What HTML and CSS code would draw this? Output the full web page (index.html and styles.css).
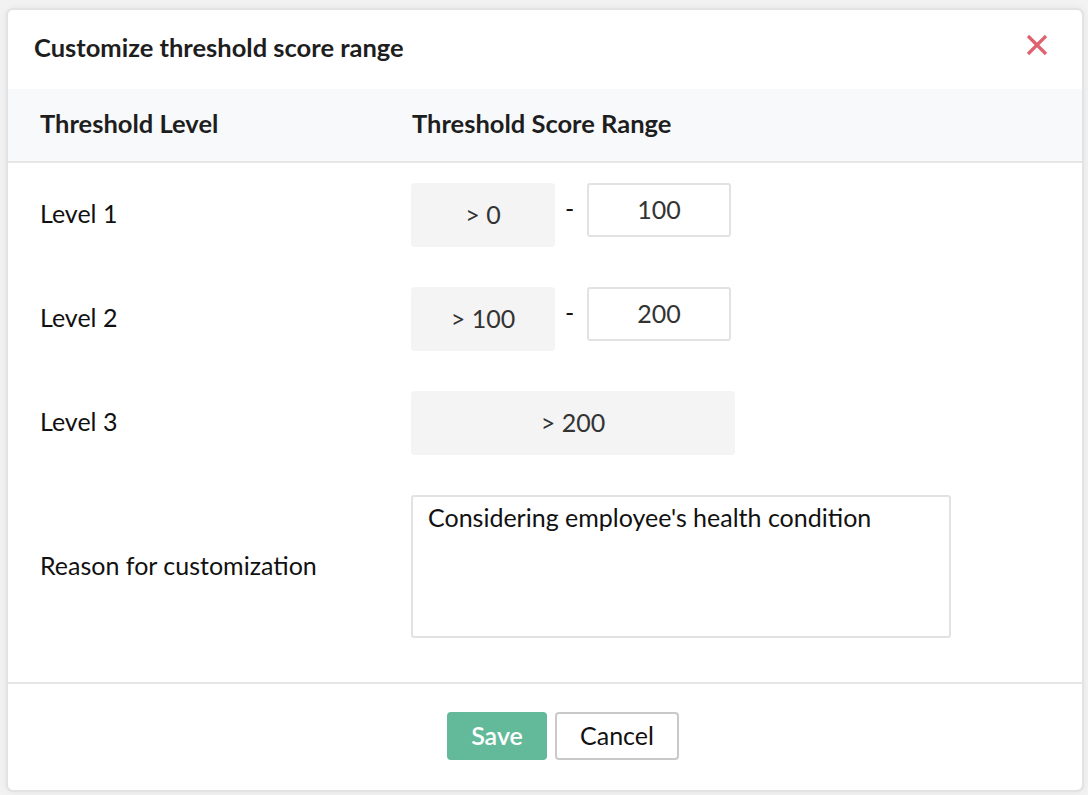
FILE: index.html
```html
<html>

<head>
	<title>Customize threshold score range</title>
	<link rel="stylesheet" href="styles.css">
</head>
<body>
	<div class="modal">
		<div class="modal-head">
			<span class="modal-title">Customize threshold score range</span>
			<svg class="close" width="22" height="22" viewBox="0 0 22 22">
				<path d="M2 2 L20 20 M20 2 L2 20" stroke="#e0626e" stroke-width="3.2" fill="none"/>
			</svg>
		</div>
		<div class="table-head">
			<span>Threshold Level</span>
			<span>Threshold Score Range</span>
		</div>
		<div class="rows">
			<div class="row">
				<span class="label">Level 1</span>
				<div class="range">
					<div class="from">&gt; 0</div>
					<span class="dash">-</span>
					<div class="to">100</div>
				</div>
			</div>
			<div class="row">
				<span class="label">Level 2</span>
				<div class="range">
					<div class="from">&gt; 100</div>
					<span class="dash">-</span>
					<div class="to">200</div>
				</div>
			</div>
			<div class="row">
				<span class="label">Level 3</span>
				<div class="range">
					<div class="from wide">&gt; 200</div>
				</div>
			</div>
			<div class="row">
				<span class="label">Reason for customization</span>
				<div class="reason">Considering employee's health condition</div>
			</div>
		</div>
		<div class="modal-foot">
			<button type="button" class="btn save">Save</button>
			<button type="button" class="btn cancel">Cancel</button>
		</div>
	</div>
</body>

</html>
```

FILE: styles.css
```css
body { margin: 0; background: #f2f2f2; font-family: Lato, "Open Sans", sans-serif; color: #111; }
.modal { margin: 8px 4px 0 6px; background: #fff; border: 2px solid #e3e3e3; border-radius: 7px; box-shadow: 0 0 6px rgba(0,0,0,0.06); }
.modal-head { height: 79px; display: flex; align-items: center; justify-content: space-between; padding: 0 34px 0 26px; }
.modal-title { font-size: 25.5px; font-weight: bold; color: #1e1e1e; margin-top: -5px; }
.close { margin-top: -9px; }
.table-head { display: grid; grid-template-columns: 372px 1fr; height: 72px; align-items: center; padding-left: 32px; background: #f8f9fa; border-bottom: 2px solid #e6e6e6; font-size: 25.5px; font-weight: bold; color: #1e1e1e; }
.table-head span { padding-bottom: 4px; }
.rows { padding: 20px 0 44px 32px; border-bottom: 2px solid #e6e6e6; }
.row { display: grid; grid-template-columns: 371px 1fr; align-items: center; margin-bottom: 40px; font-size: 25px; }
.row:last-child { margin-bottom: 0; }
.label { padding-bottom: 4px; }
.range { display: flex; align-items: flex-start; }
.from { width: 144px; height: 64px; background: #f4f4f4; border-radius: 4px; display: flex; align-items: center; justify-content: center; color: #333; padding-bottom: 3px; box-sizing: border-box; }
.from.wide { width: 324px; }
.dash { width: 32px; height: 54px; line-height: 50px; padding-left: 10px; box-sizing: border-box; }
.to { width: 144px; height: 54px; box-sizing: border-box; border: 2px solid #e2e2e2; border-radius: 3px; display: flex; align-items: center; justify-content: center; color: #333; padding-bottom: 3px; }
.reason { width: 540px; height: 143px; box-sizing: border-box; border: 2px solid #e2e2e2; border-radius: 3px; padding: 5px 15px; color: #111; }
.modal-foot { display: flex; justify-content: center; gap: 8px; padding: 28px 0 30px 36px; }
.btn { font-family: Lato, sans-serif; font-size: 25px; height: 48px; border-radius: 4px; padding-bottom: 3px; }
.save { width: 100px; background: #63ba9a; color: #fff; border: none; font-weight: 600; }
.cancel { width: 124px; background: #fff; color: #111; border: 2px solid #c9c9c9; }
```
